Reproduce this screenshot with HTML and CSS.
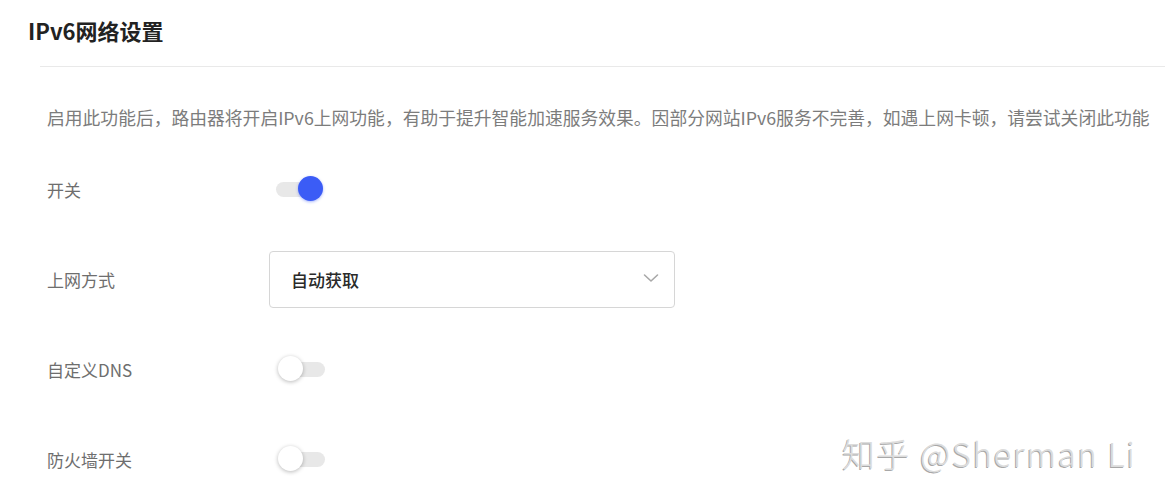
FILE: index.html
```html
<!DOCTYPE html>
<html lang="zh-CN">
<head>
<meta charset="utf-8">
<title>IPv6网络设置</title>
<link rel="stylesheet" href="styles.css">
</head>
<body>
<div class="page">
  <h1 class="title">IPv6网络设置</h1>
  <div class="divider"></div>
  <div class="content">
    <p class="desc">启用此功能后，路由器将开启IPv6上网功能，有助于提升智能加速服务效果。因部分网站IPv6服务不完善，如遇上网卡顿，请尝试关闭此功能</p>
    <div class="row">
      <div class="label">开关</div>
      <div class="switch on"><span class="track"></span><span class="knob"></span></div>
    </div>
    <div class="row">
      <div class="label">上网方式</div>
      <div class="select">
        <span class="select-text">自动获取</span>
        <svg class="chevron" width="16" height="10" viewBox="0 0 16 10"><polyline points="1.5,2 8,8 14.5,2" fill="none" stroke="#a8a8a8" stroke-width="1.6" stroke-linecap="round" stroke-linejoin="round"/></svg>
      </div>
    </div>
    <div class="row">
      <div class="label">自定义DNS</div>
      <div class="switch"><span class="track"></span><span class="knob"></span></div>
    </div>
    <div class="row">
      <div class="label">防火墙开关</div>
      <div class="switch"><span class="track"></span><span class="knob"></span></div>
    </div>
  </div>
  <div class="watermark">知乎 @Sherman Li</div>
</div>
</body>
</html>
```
FILE: styles.css
```css
* { box-sizing: border-box; }
html, body { margin: 0; padding: 0; background: #fff; }
body {
  font-family: "Noto Sans CJK SC", "Noto Sans", sans-serif;
  width: 1165px;
  height: 500px;
  overflow: hidden;
}
.page { position: relative; height: 500px; }
.title {
  margin: 0;
  padding: 15px 0 0 28px;
  font-size: 22px;
  line-height: 30px;
  font-weight: 700;
  color: #222;
}
.divider {
  margin: 21px 0 0 40px;
  height: 1px;
  background: #e9e9e9;
}
.content {
  padding-left: 47px;
  display: flex;
  flex-direction: column;
}
.desc {
  margin: 38px 0 0 0;
  font-size: 17.8px;
  line-height: 24px;
  color: #7c7c7c;
  white-space: nowrap;
}
.row {
  display: flex;
  align-items: center;
  height: 90px;
}
.row:first-of-type { margin-top: 15px; }
.label {
  width: 222px;
  font-size: 17px;
  color: #6e6e6e;
}
.switch {
  position: relative;
  width: 48px;
  height: 26px;
  margin-left: 9px;
  display: flex;
  align-items: center;
}
.track {
  display: block;
  width: 46px;
  height: 15px;
  margin-left: 1px;
  border-radius: 8px;
  background: #e8e8e8;
}
.knob {
  position: absolute;
  top: 0;
  left: 0;
  width: 25px;
  height: 25px;
  border-radius: 50%;
  background: #fff;
  box-shadow: 0 1px 4px rgba(0,0,0,0.28);
}
.switch.on .track { margin-left: -2px; width: 44px; }
.switch.on .knob {
  left: 20px;
  background: #3b5cf6;
  box-shadow: 0 1px 3px rgba(59,92,246,0.45);
}
.select {
  width: 406px;
  height: 57px;
  border: 1px solid #d6d6d6;
  border-radius: 4px;
  display: flex;
  align-items: center;
  justify-content: space-between;
  padding: 0 15px 0 21px;
}
.select-text {
  font-size: 17px;
  font-weight: 500;
  color: #2a2a2a;
}
.chevron { display: block; margin-top: -3px; }
.watermark {
  position: absolute;
  left: 842px;
  top: 433px;
  font-size: 33px;
  line-height: 40px;
  font-weight: 300;
  color: #dcdcdc;
  text-shadow: -1px 1px 0 #a8a8a8;
  white-space: nowrap;
  letter-spacing: 1.6px;
}
```
